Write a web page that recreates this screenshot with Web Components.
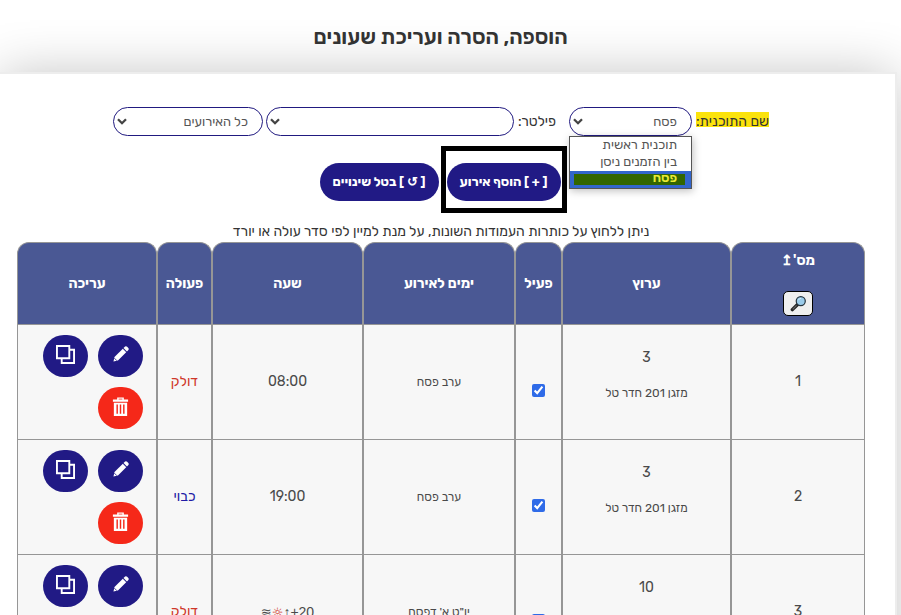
<!DOCTYPE html>
<html lang="he" dir="rtl">
<head>
<meta charset="utf-8">
<title>הוספה, הסרה ועריכת שעונים</title>
<style>
body { margin: 0; background: #fff; color: #333; font: 14px/20px Rubik, "Open Sans", "Liberation Sans", sans-serif; overflow-x: hidden; }
</style>
</head>
<body>
<clock-page>
  <span slot="title">הוספה, הסרה ועריכת שעונים</span>
  <filter-bar></filter-bar>
  <action-bar></action-bar>
  <sort-hint>ניתן ללחוץ על כותרות העמודות השונות, על מנת למיין לפי סדר עולה או יורד</sort-hint>
  <event-table></event-table>
</clock-page>
<script>
function define(name, html, setup) {
  const template = document.createElement('template');
  template.innerHTML = '<style>*{box-sizing:border-box}</style>' + html;
  customElements.define(name, class extends HTMLElement {
    constructor() {
      super();
      this.attachShadow({ mode: 'open' }).append(template.content.cloneNode(true));
    }
    connectedCallback() {
      if (setup && !this.ready) { this.ready = true; setup(this, this.shadowRoot); }
    }
  });
}

define('clock-page', `
<style>
:host { display: block; }
header { padding: 24px 20px 24px 0; text-align: center; }
h1 { margin: 0; font-size: 21px; line-height: 26px; font-weight: 600; }
main { margin: 0 6px 0 0; padding: 33px 30px 30px 17px; background: #fff; box-shadow: 0 0 0 2px #ededed, 0 0 50px rgba(0,0,0,.24); }
</style>
<header><h1><slot name="title"></slot></h1></header>
<main><slot></slot></main>`);

define('pill-select', `
<style>
:host { display: flex; align-items: center; gap: 4px; }
label { font-size: 14px; line-height: 20px; white-space: nowrap; }
label:empty { display: none; }
:host([marked]) label { background: linear-gradient(#fbe30c, #fbe30c) top / 100% 15px no-repeat; }
.field { position: relative; width: var(--field, 150px); }
select { display: block; appearance: none; width: 100%; height: 29px; padding: 0 14px; border: 1px solid #211a80; border-radius: 15px; background: transparent; color: #555; font: inherit; font-size: 13px; }
svg { position: absolute; left: 4px; top: 10px; width: 10px; height: 9px; pointer-events: none; }
</style>
<label for="s"></label>
<div class="field"><select id="s"></select>
<svg viewBox="0 0 10 9"><path d="M1 2.2 5 6.2 9 2.2" fill="none" stroke="#444" stroke-width="2.3"/></svg>
<slot></slot></div>`, (host, root) => {
  root.querySelector('label').textContent = host.getAttribute('label') || '';
  const s = root.querySelector('select');
  if (!host.hasAttribute('label')) s.setAttribute('aria-label', 'סוג אירוע');
  s.add(new Option(host.getAttribute('value') || ''));
});

define('option-list', `
<style>
:host { position: absolute; z-index: 2; top: 100%; inset-inline: 0; display: block; border: 1px solid #555; background: #fff; color: #555; box-shadow: 1px 2px 8px rgba(0,0,0,.25); font-size: 13px; line-height: 16px; }
div { padding: 0 14px; white-space: nowrap; height: 17px; }
.on { padding: 0 6px 0 4px; background: #3366cc; color: #e9ea35; font-weight: 600; }
.on span { display: block; padding: 0 8px; line-height: 14px; background: linear-gradient(#336600, #336600) 0 3px / 100% 12px no-repeat; }
</style>
<div>תוכנית ראשית</div><div>בין הזמנים ניסן</div><div class="on"><span>פסח</span></div>`);

define('filter-bar', `
<style>
:host { display: flex; align-items: center; gap: 3px; padding-right: 96px; }
.main { --field: 123px; margin-left: 10px; }
.search { --field: 248px; }
.kind { --field: 150px; }
</style>
<pill-select class="main" marked label="שם התוכנית:" value="פסח"><option-list></option-list></pill-select>
<pill-select class="search" label="פילטר:"></pill-select>
<pill-select class="kind" value="כל האירועים"></pill-select>`);

define('pill-button', `
<style>
:host { display: block; }
button { display: block; height: 38px; padding: 0 13px; border: 0; border-radius: 19px; background: #211a85; color: #fff; font: inherit; font-size: 13px; font-weight: 700; white-space: nowrap; }
</style>
<button type="button"><slot></slot></button>`);

define('action-bar', `
<style>
:host { display: flex; justify-content: center; align-items: baseline; gap: 2px; margin-top: 10px; padding-left: 4px; }
.frame { padding: 12px 1px 7px; border: 5px solid #000; }
</style>
<div class="frame"><pill-button>[ + ] הוסף אירוע</pill-button></div>
<pill-button>[ ↺ ] בטל שינויים</pill-button>`);

define('sort-hint', `
<style>
:host { display: block; margin-top: 9px; text-align: center; font-size: 14px; line-height: 20px; }
</style>
<slot></slot>`);

const icons = {
  edit: ['עריכה', '<path d="M1.6 18.4 2.8 13.4 12 4.2 15.8 8 6.6 17.2Z"/><path d="m12.8 3.4 1.7-1.6q1.1-1 2.3.1l1.3 1.3q1.1 1.2.1 2.3l-1.6 1.7Z"/><path d="m2.6 14.6 2.8 2.8" stroke="#211a85" stroke-width=".9"/>'],
  copy: ['שכפול', '<path d="M1 1h13v13H1zM15 5h4v14H6v-4" fill="none" stroke="#fff" stroke-width="2"/>'],
  remove: ['מחיקה', '<path d="M6.5 0.5h7v2h4.5v2.5H2V2.5h4.5zM3 6h14v14H3z"/><path d="M6.5 8v9.5M10 8v9.5M13.5 8v9.5" stroke="#f52819" stroke-width="1.5"/><path d="M8 2.2h4" stroke="#f52819" stroke-width=".8"/>']
};
define('icon-button', `
<style>
:host { display: block; }
button { display: grid; place-items: center; width: 45px; height: 42px; padding: 0 0 4px; border: 0; border-radius: 21px; background: #211a85; }
:host([kind=remove]) button { background: #f52819; }
svg { width: 19px; height: 19px; fill: #fff; }
:host([kind=edit]) svg { width: 18px; height: 18px; }
</style>
<button type="button"><svg viewBox="0 0 20 20"></svg></button>`, (host, root) => {
  const [name, art] = icons[host.getAttribute('kind')];
  root.querySelector('button').setAttribute('aria-label', name);
  root.querySelector('svg').innerHTML = art;
});

define('event-table', `
<style>
:host { display: block; }
table { width: 100%; table-layout: fixed; border-collapse: separate; border-spacing: 0; text-align: center; }
th { height: 82px; padding: 0; border: 1px solid #969696; border-bottom: 0; border-radius: 12px 12px 0 0; background: #4a5894; color: #fff; font-size: 14px; line-height: 20px; }
td { height: 115px; padding: 0; border: solid #969696; border-width: 1px 1px 0; background: #f7f7f7; color: #4a4a4a; font-size: 14px; line-height: 20px; }
.search { display: grid; place-items: center; width: 30px; height: 25px; margin: 20px auto 0; padding: 0; border: 1px solid #000; border-radius: 5px; background: #efefef; }
.search svg { width: 17px; height: 17px; }
.channel { padding-bottom: 14px; }
.name { margin-top: 15px; font-size: 12px; }
.days { font-size: 12px; }
input { display: block; width: 13px; height: 13px; margin: 16px auto 0; accent-color: #2f6be8; }
.on, .sun { color: #cf3629; }
.off { color: #211aa5; }
bdo { font-family: "Liberation Sans", "DejaVu Sans", sans-serif; }
.symbol { font-family: "DejaVu Sans", sans-serif; font-size: 13px; }
.tools { display: flex; flex-wrap: wrap; gap: 10px; padding: 0 13px 0 12px; }
</style>
<table>
<colgroup><col style="width:134px"><col style="width:169px"><col style="width:47px"><col style="width:152px"><col style="width:151px"><col style="width:55px"><col style="width:140px"></colgroup>
<thead><tr>
<th scope="col">מס'↥<button class="search" type="button" aria-label="חיפוש"><svg viewBox="0 0 18 18"><path d="M2.5 15.5 8 10" stroke="#222" stroke-width="3.6" stroke-linecap="round"/><path d="M2.8 15.2 7 11" stroke="#666" stroke-width="1.2"/><circle cx="11.4" cy="6.4" r="4.8" fill="#9acbea" stroke="#26353f" stroke-width="1.3"/><path d="M8.8 5.5q1-2 3-2" stroke="#d8f0fc" fill="none"/></svg></button></th>
<th scope="col">ערוץ</th><th scope="col">פעיל</th><th scope="col">ימים לאירוע</th><th scope="col">שעה</th><th scope="col">פעולה</th><th scope="col">עריכה</th>
</tr></thead><tbody></tbody></table>`, (host, root) => {
  const rows = [
    [1, 3, 'ערב פסח', '08:00', 'דולק', 'on'],
    [2, 3, 'ערב פסח', '19:00', 'כבוי', 'off'],
    [3, 10, "יו\"ט א' דפסח", '<bdo dir="ltr"><span class="symbol">≋</span><span class="symbol sun">☼</span>↑+20</bdo>', 'דולק', 'on']
  ];
  root.querySelector('tbody').innerHTML = rows.map(([n, channel, days, time, action, state]) => `<tr>
<td>${n}</td><td class="channel">${channel}<div class="name">מזגן 201 חדר טל</div></td>
<td><input type="checkbox" checked aria-label="פעיל ${n}"></td><td class="days">${days}</td><td>${time}</td><td class="${state}">${action}</td>
<td><div class="tools"><icon-button kind="edit"></icon-button><icon-button kind="copy"></icon-button><icon-button kind="remove"></icon-button></div></td></tr>`).join('');
});
</script>
</body>
</html>
